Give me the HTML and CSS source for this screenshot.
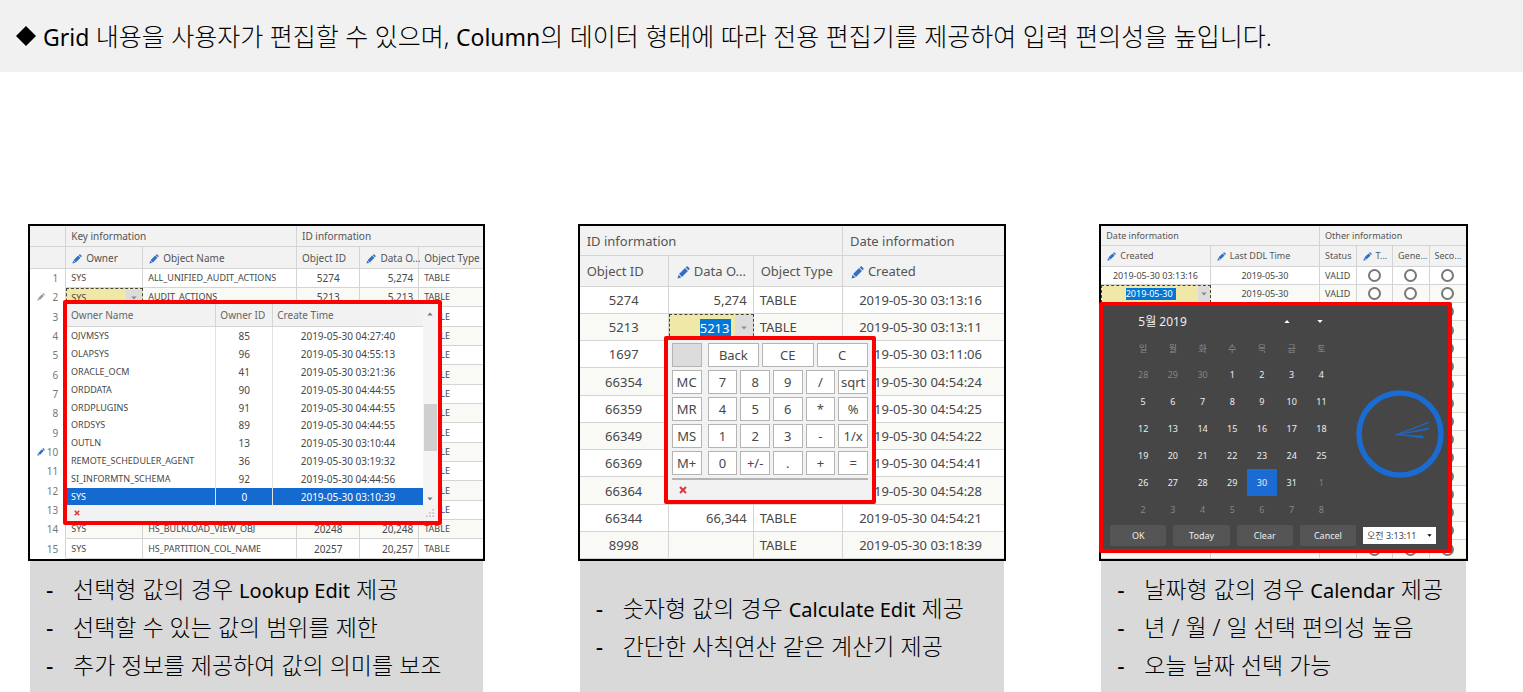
FILE: index.html
```html
<!DOCTYPE html>
<html lang="ko">
<head>
    <meta charset="UTF-8">
    <meta name="viewport" content="width=device-width, initial-scale=1.0">
    <title>Grid 편집기</title>
    <link rel="stylesheet" href="styles.css">
</head>
<body>
    <svg class="symbols" aria-hidden="true">
        <symbol id="pencil" viewBox="0 0 12 12">
            <path d="M0.5 11.5 L1.4 8 L4 10.6 Z M1.9 7.4 L7.4 1.9 L10.1 4.6 L4.6 10.1 Z M8 1.3 L8.9 0.5 Q9.4 0.1 9.9 0.5 L11.5 2.1 Q11.9 2.6 11.5 3.1 L10.7 4 Z"/>
        </symbol>
        <symbol id="cross" viewBox="0 0 8 8">
            <path d="M1 1 L7 7 M7 1 L1 7" fill="none" stroke="#d9363e" stroke-width="2"/>
        </symbol>
        <symbol id="down" viewBox="0 0 8 5">
            <path d="M0.5 0.5 H7.5 L4 4.5 Z"/>
        </symbol>
        <symbol id="up" viewBox="0 0 8 5">
            <path d="M0.5 4.5 H7.5 L4 0.5 Z"/>
        </symbol>
    </svg>

    <header class="title-bar">
        <svg class="diamond" viewBox="0 0 20 20"><path d="M10 0 L20 10 L10 20 L0 10 Z"/></svg>
        <h1><span lang="en">Grid</span> 내용을 사용자가 편집할 수 있으며, <span lang="en">Column</span>의 데이터 형태에 따라 전용 편집기를 제공하여 입력 편의성을 높입니다.</h1>
    </header>

    <main class="panels">
        <!-- Lookup edit -->
        <section class="panel">
            <div class="shot">
                <table class="grid grid-lookup">
                    <colgroup><col class="c-num"><col class="c-owner"><col class="c-name"><col class="c-id"><col class="c-data"><col class="c-type"></colgroup>
                    <thead>
                        <tr><th></th><th colspan="2">Key information</th><th colspan="3">ID information</th></tr>
                        <tr><th></th><th><svg class="pencil"><use href="#pencil"/></svg>Owner</th><th><svg class="pencil"><use href="#pencil"/></svg>Object Name</th><th>Object ID</th><th><svg class="pencil"><use href="#pencil"/></svg>Data O...</th><th>Object Type</th></tr>
                    </thead>
                    <tbody>
                        <tr><td class="num">1</td><td class="name">SYS</td><td class="name">ALL_UNIFIED_AUDIT_ACTIONS</td><td class="center">5274</td><td class="right">5,274</td><td class="name">TABLE</td></tr>
                        <tr><td class="num"><svg class="row-mark gray"><use href="#pencil"/></svg>2</td><td class="name editing"><div class="editor"><input class="owner-input" type="text" value="SYS" aria-label="Owner"><button type="button" class="drop" aria-label="Open list"><svg><use href="#down"/></svg></button></div></td><td class="name">AUDIT_ACTIONS</td><td class="center">5213</td><td class="right">5,213</td><td class="name">TABLE</td></tr>
                        <tr><td class="num">3</td><td></td><td></td><td></td><td></td><td class="name">TABLE</td></tr>
                        <tr><td class="num">4</td><td></td><td></td><td></td><td></td><td class="name">TABLE</td></tr>
                        <tr><td class="num">5</td><td></td><td></td><td></td><td></td><td class="name">TABLE</td></tr>
                        <tr><td class="num">6</td><td></td><td></td><td></td><td></td><td class="name">TABLE</td></tr>
                        <tr><td class="num">7</td><td></td><td></td><td></td><td></td><td class="name">TABLE</td></tr>
                        <tr><td class="num">8</td><td></td><td></td><td></td><td></td><td class="name">TABLE</td></tr>
                        <tr><td class="num">9</td><td></td><td></td><td></td><td></td><td class="name">TABLE</td></tr>
                        <tr><td class="num"><svg class="row-mark"><use href="#pencil"/></svg>10</td><td></td><td></td><td></td><td></td><td class="name">TABLE</td></tr>
                        <tr><td class="num">11</td><td></td><td></td><td></td><td></td><td class="name">TABLE</td></tr>
                        <tr><td class="num">12</td><td></td><td></td><td></td><td></td><td class="name">TABLE</td></tr>
                        <tr><td class="num">13</td><td></td><td></td><td></td><td></td><td class="name">TABLE</td></tr>
                        <tr><td class="num">14</td><td class="name">SYS</td><td class="name">HS_BULKLOAD_VIEW_OBJ</td><td class="center">20248</td><td class="right">20,248</td><td class="name">TABLE</td></tr>
                        <tr><td class="num">15</td><td class="name">SYS</td><td class="name">HS_PARTITION_COL_NAME</td><td class="center">20257</td><td class="right">20,257</td><td class="name">TABLE</td></tr>
                    </tbody>
                </table>

                <div class="popup lookup">
                    <div class="lookup-body">
                        <table class="lookup-table">
                            <colgroup><col class="l-name"><col class="l-id"><col class="l-time"></colgroup>
                            <thead><tr><th>Owner Name</th><th>Owner ID</th><th>Create Time</th></tr></thead>
                            <tbody>
                                <tr><td class="name">OJVMSYS</td><td>85</td><td>2019-05-30 04:27:40</td></tr>
                                <tr><td class="name">OLAPSYS</td><td>96</td><td>2019-05-30 04:55:13</td></tr>
                                <tr><td class="name">ORACLE_OCM</td><td>41</td><td>2019-05-30 03:21:36</td></tr>
                                <tr><td class="name">ORDDATA</td><td>90</td><td>2019-05-30 04:44:55</td></tr>
                                <tr><td class="name">ORDPLUGINS</td><td>91</td><td>2019-05-30 04:44:55</td></tr>
                                <tr><td class="name">ORDSYS</td><td>89</td><td>2019-05-30 04:44:55</td></tr>
                                <tr><td class="name">OUTLN</td><td>13</td><td>2019-05-30 03:10:44</td></tr>
                                <tr><td class="name">REMOTE_SCHEDULER_AGENT</td><td>36</td><td>2019-05-30 03:19:32</td></tr>
                                <tr><td class="name">SI_INFORMTN_SCHEMA</td><td>92</td><td>2019-05-30 04:44:56</td></tr>
                                <tr class="selected"><td class="name">SYS</td><td>0</td><td>2019-05-30 03:10:39</td></tr>
                            </tbody>
                        </table>
                        <div class="scrollbar">
                            <svg class="arrow"><use href="#up"/></svg>
                            <div class="thumb"></div>
                            <svg class="arrow"><use href="#down"/></svg>
                        </div>
                    </div>
                    <div class="lookup-foot">
                        <button type="button" class="close" aria-label="Close"><svg><use href="#cross"/></svg></button>
                        <svg class="grip" viewBox="0 0 10 10"><path d="M8 0h2v2h-2z M4 4h2v2h-2z M8 4h2v2h-2z M0 8h2v2h-2z M4 8h2v2h-2z M8 8h2v2h-2z"/></svg>
                    </div>
                </div>
            </div>
            <ul class="caption">
                <li>선택형 값의 경우 <span lang="en">Lookup Edit</span> 제공</li>
                <li>선택할 수 있는 값의 범위를 제한</li>
                <li>추가 정보를 제공하여 값의 의미를 보조</li>
            </ul>
        </section>

        <!-- Calculator edit -->
        <section class="panel">
            <div class="shot">
                <table class="grid grid-calc">
                    <colgroup><col class="k-id"><col class="k-data"><col class="k-type"><col class="k-time"></colgroup>
                    <thead>
                        <tr><th colspan="3">ID information</th><th>Date information</th></tr>
                        <tr><th>Object ID</th><th><svg class="pencil"><use href="#pencil"/></svg>Data O...</th><th>Object Type</th><th><svg class="pencil"><use href="#pencil"/></svg>Created</th></tr>
                    </thead>
                    <tbody>
                        <tr><td class="center">5274</td><td class="right">5,274</td><td>TABLE</td><td class="center">2019-05-30 03:13:16</td></tr>
                        <tr><td class="center">5213</td><td class="editing"><div class="editor"><input class="number-input" type="text" value="5213" aria-label="Data Object ID"><button type="button" class="drop" aria-label="Open calculator"><svg><use href="#down"/></svg></button></div></td><td>TABLE</td><td class="center">2019-05-30 03:13:11</td></tr>
                        <tr><td class="center">1697</td><td></td><td></td><td class="center">2019-05-30 03:11:06</td></tr>
                        <tr><td class="center">66354</td><td></td><td></td><td class="center">2019-05-30 04:54:24</td></tr>
                        <tr><td class="center">66359</td><td></td><td></td><td class="center">2019-05-30 04:54:25</td></tr>
                        <tr><td class="center">66349</td><td></td><td></td><td class="center">2019-05-30 04:54:22</td></tr>
                        <tr><td class="center">66369</td><td></td><td></td><td class="center">2019-05-30 04:54:41</td></tr>
                        <tr><td class="center">66364</td><td></td><td></td><td class="center">2019-05-30 04:54:28</td></tr>
                        <tr><td class="center">66344</td><td class="right">66,344</td><td>TABLE</td><td class="center">2019-05-30 04:54:21</td></tr>
                        <tr><td class="center">8998</td><td></td><td>TABLE</td><td class="center">2019-05-30 03:18:39</td></tr>
                    </tbody>
                </table>

                <div class="popup calc">
                    <div class="calc-keys">
                        <div class="memory">
                            <span class="memory-state"></span>
                            <button type="button">MC</button>
                            <button type="button">MR</button>
                            <button type="button">MS</button>
                            <button type="button">M+</button>
                        </div>
                        <div class="keys">
                            <button type="button" class="wide">Back</button>
                            <button type="button" class="wide">CE</button>
                            <button type="button" class="wide">C</button>
                            <button type="button">7</button>
                            <button type="button">8</button>
                            <button type="button">9</button>
                            <button type="button">/</button>
                            <button type="button">sqrt</button>
                            <button type="button">4</button>
                            <button type="button">5</button>
                            <button type="button">6</button>
                            <button type="button">*</button>
                            <button type="button">%</button>
                            <button type="button">1</button>
                            <button type="button">2</button>
                            <button type="button">3</button>
                            <button type="button">-</button>
                            <button type="button">1/x</button>
                            <button type="button">0</button>
                            <button type="button">+/-</button>
                            <button type="button">.</button>
                            <button type="button">+</button>
                            <button type="button">=</button>
                        </div>
                    </div>
                    <div class="calc-foot">
                        <button type="button" class="close" aria-label="Close"><svg><use href="#cross"/></svg></button>
                    </div>
                </div>
            </div>
            <ul class="caption">
                <li>숫자형 값의 경우 <span lang="en">Calculate Edit</span> 제공</li>
                <li>간단한 사칙연산 같은 계산기 제공</li>
            </ul>
        </section>

        <!-- Calendar edit -->
        <section class="panel">
            <div class="shot">
                <table class="grid grid-date">
                    <colgroup><col class="d-created"><col class="d-ddl"><col class="d-flag"><col class="d-flag"><col class="d-flag"><col class="d-flag"></colgroup>
                    <thead>
                        <tr><th colspan="2">Date information</th><th colspan="4">Other information</th></tr>
                        <tr><th><svg class="pencil"><use href="#pencil"/></svg>Created</th><th><svg class="pencil"><use href="#pencil"/></svg>Last DDL Time</th><th>Status</th><th><svg class="pencil"><use href="#pencil"/></svg>T...</th><th>Gene...</th><th>Seco...</th></tr>
                    </thead>
                    <tbody>
                        <tr><td class="center">2019-05-30 03:13:16</td><td class="center">2019-05-30</td><td>VALID</td><td class="center"><input type="radio" aria-label="Temporary"></td><td class="center"><input type="radio" aria-label="Generated"></td><td class="center"><input type="radio" aria-label="Secondary"></td></tr>
                        <tr><td class="editing"><div class="editor"><input class="date-input" type="text" value="2019-05-30" aria-label="Created"><button type="button" class="drop" aria-label="Open calendar"><svg><use href="#down"/></svg></button></div></td><td class="center">2019-05-30</td><td>VALID</td><td class="center"><input type="radio" aria-label="Temporary"></td><td class="center"><input type="radio" aria-label="Generated"></td><td class="center"><input type="radio" aria-label="Secondary"></td></tr>
                        <tr><td></td><td></td><td></td><td></td><td></td><td class="center"><input type="radio" aria-label="Secondary"></td></tr>
                        <tr><td></td><td></td><td></td><td></td><td></td><td class="center"><input type="radio" aria-label="Secondary"></td></tr>
                        <tr><td></td><td></td><td></td><td></td><td></td><td class="center"><input type="radio" aria-label="Secondary"></td></tr>
                        <tr><td></td><td></td><td></td><td></td><td></td><td class="center"><input type="radio" aria-label="Secondary"></td></tr>
                        <tr><td></td><td></td><td></td><td></td><td></td><td class="center"><input type="radio" aria-label="Secondary"></td></tr>
                        <tr><td></td><td></td><td></td><td></td><td></td><td class="center"><input type="radio" aria-label="Secondary"></td></tr>
                        <tr><td></td><td></td><td></td><td></td><td></td><td class="center"><input type="radio" aria-label="Secondary"></td></tr>
                        <tr><td></td><td></td><td></td><td></td><td></td><td class="center"><input type="radio" aria-label="Secondary"></td></tr>
                        <tr><td></td><td></td><td></td><td></td><td></td><td class="center"><input type="radio" aria-label="Secondary"></td></tr>
                        <tr><td></td><td></td><td></td><td></td><td></td><td class="center"><input type="radio" aria-label="Secondary"></td></tr>
                        <tr><td></td><td></td><td></td><td></td><td></td><td class="center"><input type="radio" aria-label="Secondary"></td></tr>
                        <tr><td></td><td></td><td></td><td></td><td></td><td class="center"><input type="radio" aria-label="Secondary"></td></tr>
                        <tr><td></td><td></td><td></td><td></td><td></td><td class="center"><input type="radio" aria-label="Secondary"></td></tr>
                        <tr><td></td><td></td><td></td><td class="center"><input type="radio" aria-label="Temporary"></td><td class="center"><input type="radio" aria-label="Generated"></td><td class="center"><input type="radio" aria-label="Secondary"></td></tr>
                    </tbody>
                </table>

                <div class="popup calendar">
                    <div class="calendar-main">
                        <div class="month">
                            <div class="month-head">
                                <span>5월 2019</span>
                                <button type="button" aria-label="Previous month"><svg><use href="#up"/></svg></button>
                                <button type="button" aria-label="Next month"><svg><use href="#down"/></svg></button>
                            </div>
                            <table class="days">
                                <thead><tr><th>일</th><th>월</th><th>화</th><th>수</th><th>목</th><th>금</th><th>토</th></tr></thead>
                                <tbody>
                                    <tr><td class="other">28</td><td class="other">29</td><td class="other">30</td><td>1</td><td>2</td><td>3</td><td>4</td></tr>
                                    <tr><td>5</td><td>6</td><td>7</td><td>8</td><td>9</td><td>10</td><td>11</td></tr>
                                    <tr><td>12</td><td>13</td><td>14</td><td>15</td><td>16</td><td>17</td><td>18</td></tr>
                                    <tr><td>19</td><td>20</td><td>21</td><td>22</td><td>23</td><td>24</td><td>25</td></tr>
                                    <tr><td>26</td><td>27</td><td>28</td><td>29</td><td class="today">30</td><td>31</td><td class="other">1</td></tr>
                                    <tr><td class="other">2</td><td class="other">3</td><td class="other">4</td><td class="other">5</td><td class="other">6</td><td class="other">7</td><td class="other">8</td></tr>
                                </tbody>
                            </table>
                        </div>
                        <svg class="clock" viewBox="0 0 88 88">
                            <circle cx="44" cy="44" r="41" fill="none" stroke="#1a6bd2" stroke-width="5.5"/>
                            <path d="M40 45 L73 32 L72 33 Z" stroke="#1a6bd2" stroke-width="0.7" fill="#1a6bd2"/>
                            <path d="M39 45 L73 38 L72 39.5 Z M40 44.5 L67 46 L67 48 Z" stroke="#1a6bd2" stroke-width="0.6" fill="#1a6bd2"/>
                        </svg>
                    </div>
                    <div class="calendar-foot">
                        <button type="button">OK</button>
                        <button type="button">Today</button>
                        <button type="button">Clear</button>
                        <button type="button">Cancel</button>
                        <div class="time"><input type="text" value="오전 3:13:11" aria-label="Time"><button type="button" aria-label="Choose time"><svg><use href="#down"/></svg></button></div>
                    </div>
                </div>
            </div>
            <ul class="caption">
                <li>날짜형 값의 경우 <span lang="en">Calendar</span> 제공</li>
                <li>년 / 월 / 일 선택 편의성 높음</li>
                <li>오늘 날짜 선택 가능</li>
            </ul>
        </section>
    </main>
</body>
</html>
```

FILE: styles.css
```css
* {
    box-sizing: border-box;
}
body {
    margin: 0;
    min-height: 100vh;
    display: flex;
    flex-direction: column;
    font-family: "Noto Sans", "Noto Sans CJK KR", sans-serif;
    background: #fff;
    color: #000;
}
button, input {
    font: inherit;
    color: inherit;
    margin: 0;
    padding: 0;
    border: none;
    border-radius: 0;
    background: none;
}
button {
    cursor: pointer;
}
svg {
    display: block;
}
.symbols {
    position: absolute;
    width: 0;
    height: 0;
}

/* title */
.title-bar {
    display: flex;
    align-items: center;
    gap: 7px;
    background: #f1f1f1;
    padding: 18px 16px;
}
h1 {
    margin: 0;
    font-size: 25px;
    font-weight: 300;
    line-height: 36px;
}
h1 span {
    font-size: 23px;
    font-weight: 400;
    line-height: 1;
}
.diamond {
    width: 20px;
    height: 20px;
}

/* panels */
.panels {
    flex: 1;
    display: grid;
    grid-template-columns: 457fr 429fr 369fr;
    column-gap: 93px;
    padding: 152px 55px 0 28px;
}
.panel {
    display: flex;
    flex-direction: column;
}
.shot {
    position: relative;
    border: 2px solid #000;
}
.caption {
    flex: 1;
    display: flex;
    flex-direction: column;
    justify-content: center;
    margin: 0 2px;
    padding: 0 16px;
    list-style: none;
    background: #d9d9d9;
    font-size: 23px;
    font-weight: 300;
    line-height: 38px;
}
.caption li {
    padding-left: 27px;
}
.caption li::before {
    content: "-";
    float: left;
    width: 27px;
    margin-left: -27px;
    font-weight: 400;
}
.caption span {
    font-size: 20px;
    font-weight: 400;
    line-height: 1;
}

/* grids */
.grid {
    width: 100%;
    table-layout: fixed;
    border-collapse: separate;
    border-spacing: 0;
    color: #484848;
    white-space: nowrap;
}
.grid th, .grid td {
    padding: 0 5px;
    border-right: 1px solid #d4d4d4;
    border-bottom: 1px solid #d4d4d4;
    font-weight: 400;
    text-align: left;
}
.grid th {
    background: #f2f2f2;
    color: #555;
}
.grid tr > :last-child {
    border-right: none;
}
.grid tbody tr:nth-child(even) td {
    background: #f9f9f5;
}
.grid .center {
    text-align: center;
}
.grid .right {
    text-align: right;
}
.name {
    font-size: 9px;
}
.pencil {
    display: inline-block;
    width: 1em;
    height: 1em;
    margin: 0 4px 0 1px;
    vertical-align: middle;
    fill: #2f6fc4;
}
.grid tbody .editing, .grid tbody tr:nth-child(even) .editing {
    padding: 0;
    background: #f0e8a6;
    border: 1px dashed #444;
}
.editor {
    display: flex;
    justify-content: flex-end;
    align-items: center;
}
.drop {
    width: 16px;
    align-self: stretch;
    display: flex;
    align-items: center;
    justify-content: center;
    background: #dcdcdc;
}
.drop svg {
    width: 6px;
    height: 4px;
    fill: #888;
}

.grid-lookup {
    font-size: 10px;
    line-height: 16px;
}
.grid-lookup th {
    height: 21px;
}
.grid-lookup tr + tr th {
    height: 22px;
}
.grid-lookup td {
    height: 19px;
}
.grid-lookup tbody tr:nth-child(3n) td {
    height: 20px;
}
.c-num { width: 8%; }
.c-owner { width: 17%; }
.c-name { width: 34%; }
.c-id { width: 14%; }
.c-data { width: 13%; }
.c-type { width: 14%; }
.grid-lookup th:last-child {
    padding-right: 0;
}
.grid tbody tr .num, .grid tbody tr:nth-child(even) .num {
    padding-right: 7px;
    background: #fff;
    border-bottom-color: #fff;
    text-align: right;
    color: #777;
}
.row-mark {
    float: left;
    width: 8px;
    height: 8px;
    margin: 4px 0 0 2px;
    fill: #2f6fc4;
}
.row-mark.gray {
    fill: #999;
}
.owner-input {
    flex: 1;
    width: 0;
    height: 16px;
    padding-left: 4px;
}

.grid-calc {
    font-size: 13px;
    line-height: 20px;
}
.grid-calc th {
    height: 30px;
    padding: 0 7px;
}
.grid-calc tr + tr th {
    height: 31px;
}
.grid-calc td {
    height: 27px;
    padding: 0 6px;
}
.grid-calc td:last-child {
    padding-right: 12px;
}
.grid-calc tbody tr:nth-child(4n) td {
    height: 28px;
}
.k-id { width: 21%; }
.k-data { width: 20%; }
.k-type { width: 21%; }
.k-time { width: 38%; }
.number-input {
    width: 31px;
    height: 18px;
    margin-right: 4px;
    background: #0078d7;
    color: #fff;
}
.grid-calc .editor {
    height: 25px;
}
.grid-calc .drop {
    width: 18px;
}

.grid-date {
    font-size: 9px;
    line-height: 14px;
}
.grid-date th {
    height: 20px;
}
.grid-date tr + tr th {
    height: 21px;
}
.grid-date td {
    height: 18px;
}
.grid-date tbody tr:nth-child(4n) td {
    height: 19px;
}
.d-created, .d-ddl { width: 30%; }
.d-flag { width: 10%; }
.date-input {
    width: 50px;
    height: 12px;
    margin-right: 22px;
    background: #0078d7;
    color: #fff;
}
.grid-date .editor {
    height: 16px;
}
.grid-date .drop {
    width: 12px;
}
input[type="radio"] {
    appearance: none;
    display: block;
    width: 13px;
    height: 13px;
    margin: 0 auto;
    border: 2px solid #777;
    border-radius: 50%;
    background: #fff;
}

/* popups */
.popup {
    position: absolute;
    border: 4px solid #fb0000;
    border-radius: 2px;
    background: #f2f2f2;
    color: #484848;
}
.close svg {
    width: 8px;
    height: 8px;
}

.lookup {
    left: 33px;
    right: 41px;
    top: 74px;
    font-size: 10px;
    line-height: 16px;
}
.lookup-body {
    display: flex;
}
.lookup-table {
    flex: 1;
    table-layout: fixed;
    border-spacing: 0;
    background: #fff;
    white-space: nowrap;
}
.lookup-table th {
    height: 23px;
    padding: 0 4px;
    background: #f2f2f2;
    border-right: 1px solid #d4d4d4;
    border-bottom: 1px solid #d4d4d4;
    font-weight: 400;
    text-align: left;
    color: #666;
}
.lookup-table td {
    height: 18px;
    padding: 0 4px;
    border-right: 1px solid #e2e2e2;
    text-align: center;
}
.lookup-table tr:nth-child(5n) td {
    height: 17px;
}
.lookup-table td:first-child {
    text-align: left;
}
.lookup-table tr > :last-child {
    border-right: none;
}
.lookup-table .selected td {
    background: #156ad0;
    color: #fff;
}
.l-name { width: 42%; }
.l-id { width: 16%; }
.l-time { width: 42%; }
.scrollbar {
    width: 15px;
    display: flex;
    flex-direction: column;
    align-items: center;
    padding: 8px 0 4px;
    background: #f4f4f4;
}
.scrollbar .arrow {
    width: 6px;
    height: 4px;
    fill: #777;
}
.thumb {
    width: 13px;
    height: 47px;
    margin: auto 0 46px;
    background: #cfcfcf;
}
.lookup-foot {
    height: 16px;
    display: flex;
    align-items: center;
    justify-content: space-between;
    padding: 0 4px 0 7px;
}
.lookup-foot .close svg {
    width: 6px;
    height: 6px;
}
.grip {
    width: 8px;
    height: 8px;
    fill: #bbb;
}

.calc {
    left: 84px;
    top: 110px;
    width: 50%;
    padding: 3px 4px 0;
    font-size: 13px;
    line-height: 18px;
}
.calc-keys {
    display: flex;
    gap: 6px;
    padding-bottom: 3px;
    border-bottom: 2px solid #b4b4b4;
}
.memory {
    width: 30px;
    display: grid;
    gap: 3px;
}
.keys {
    flex: 1;
    display: grid;
    grid-template-columns: repeat(15, 1fr);
    row-gap: 3px;
    margin-right: -3px;
}
.memory button, .memory-state, .keys button {
    height: 24px;
    border: 1px solid #b4b4b4;
    background: #fff;
    text-align: center;
}
.keys button {
    grid-column: span 3;
    margin-right: 3px;
}
.keys .wide {
    grid-column: span 5;
}
.memory .memory-state {
    background: #dcdcdc;
}
.calc-foot {
    height: 20px;
    display: flex;
    align-items: center;
    padding-left: 7px;
}

.calendar {
    left: -2px;
    right: 14px;
    top: 76px;
    background: #464646;
    color: #eee;
    font-size: 9px;
    line-height: 14px;
}
.calendar-main {
    display: flex;
    align-items: center;
    justify-content: space-between;
    padding: 0 4px 0 25px;
}
.month {
    width: 208px;
}
.month-head {
    display: flex;
    align-items: center;
    height: 31px;
    padding-left: 10px;
    font-size: 12px;
}
.month-head span {
    flex: 1;
}
.month-head button {
    width: 33px;
    display: flex;
    justify-content: center;
}
.month-head svg {
    width: 6px;
    height: 5px;
    fill: #fff;
}
.days {
    width: 100%;
    table-layout: fixed;
    border-spacing: 0;
    text-align: center;
}
.days th {
    height: 24px;
    padding: 0;
    font-weight: 400;
    color: #8c8c8c;
}
.days td {
    height: 27px;
    padding: 0;
}
.days .other {
    color: #858585;
}
.days .today {
    background: #1a6bd2;
}
.clock {
    width: 88px;
    height: 88px;
    margin-top: 38px;
}
.calendar-foot {
    display: flex;
    align-items: center;
    gap: 7px;
    padding: 2px 12px 3px 7px;
}
.calendar-foot > button {
    flex: 1;
    height: 21px;
    border-radius: 2px;
    background: #555;
}
.time {
    width: 73px;
    height: 17px;
    display: flex;
    background: #fff;
    color: #444;
}
.time input {
    width: 59px;
    padding-left: 4px;
}
.time button {
    flex: 1;
    display: flex;
    align-items: center;
    justify-content: center;
}
.time svg {
    width: 5px;
    height: 3px;
}
```
